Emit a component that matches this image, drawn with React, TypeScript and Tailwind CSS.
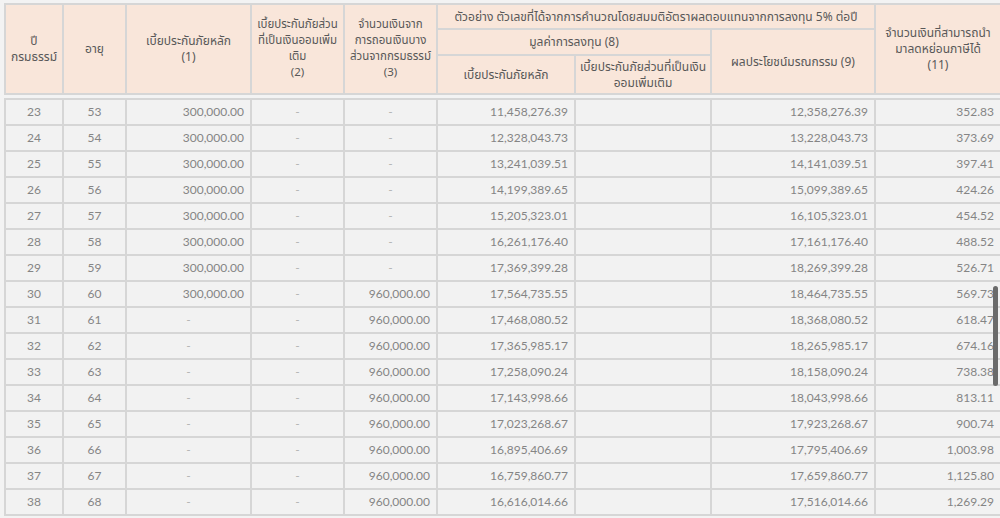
import React from "react"

type Row = [string, string, string, string, string, string, string, string, string]

const rows: Row[] = [
  ["23", "53", "300,000.00", "-", "-", "11,458,276.39", "", "12,358,276.39", "352.83"],
  ["24", "54", "300,000.00", "-", "-", "12,328,043.73", "", "13,228,043.73", "373.69"],
  ["25", "55", "300,000.00", "-", "-", "13,241,039.51", "", "14,141,039.51", "397.41"],
  ["26", "56", "300,000.00", "-", "-", "14,199,389.65", "", "15,099,389.65", "424.26"],
  ["27", "57", "300,000.00", "-", "-", "15,205,323.01", "", "16,105,323.01", "454.52"],
  ["28", "58", "300,000.00", "-", "-", "16,261,176.40", "", "17,161,176.40", "488.52"],
  ["29", "59", "300,000.00", "-", "-", "17,369,399.28", "", "18,269,399.28", "526.71"],
  ["30", "60", "300,000.00", "-", "960,000.00", "17,564,735.55", "", "18,464,735.55", "569.73"],
  ["31", "61", "-", "-", "960,000.00", "17,468,080.52", "", "18,368,080.52", "618.47"],
  ["32", "62", "-", "-", "960,000.00", "17,365,985.17", "", "18,265,985.17", "674.16"],
  ["33", "63", "-", "-", "960,000.00", "17,258,090.24", "", "18,158,090.24", "738.38"],
  ["34", "64", "-", "-", "960,000.00", "17,143,998.66", "", "18,043,998.66", "813.11"],
  ["35", "65", "-", "-", "960,000.00", "17,023,268.67", "", "17,923,268.67", "900.74"],
  ["36", "66", "-", "-", "960,000.00", "16,895,406.69", "", "17,795,406.69", "1,003.98"],
  ["37", "67", "-", "-", "960,000.00", "16,759,860.77", "", "17,659,860.77", "1,125.80"],
  ["38", "68", "-", "-", "960,000.00", "16,616,014.66", "", "17,516,014.66", "1,269.29"],
]

const widths = [58, 63, 125, 93, 93, 138, 136, 164, 126]

function Cols() {
  return (
    <colgroup>
      {widths.map((w, i) => (
        <col key={i} style={{ width: w }} />
      ))}
    </colgroup>
  )
}

const th =
  "border-2 border-[#d6d6d6] bg-[#f9e6da] text-center align-middle px-0 py-0 font-normal whitespace-nowrap overflow-hidden"

export default function App() {
  return (
    <div className="relative w-[1000px] h-[518px] overflow-hidden bg-[#f3f3f3] pt-[3px] pl-[4px]">
      <table
        className="table-fixed border-collapse w-[996px] text-[12px] leading-[16px] text-[#585858]"
        style={{ fontFamily: '"Noto Sans Thai", Tahoma, "Noto Sans", "DejaVu Sans", sans-serif' }}
      >
        <Cols />
        <thead>
          <tr className="h-[25px]">
            <th rowSpan={3} className={th}>
              ปี<br />กรมธรรม์
            </th>
            <th rowSpan={3} className={th}>อายุ</th>
            <th rowSpan={3} className={th}>
              เบี้ยประกันภัยหลัก<br />(1)
            </th>
            <th rowSpan={3} className={th + " text-[11.5px]"}>
              เบี้ยประกันภัยส่วน<br />ที่เป็นเงินออมเพิ่ม<br />เติม<br />(2)
            </th>
            <th rowSpan={3} className={th + " text-[11.5px]"}>
              จำนวนเงินจาก<br />การถอนเงินบาง<br />ส่วนจากกรมธรรม์<br />(3)
            </th>
            <th colSpan={3} className={th}>
              ตัวอย่าง ตัวเลขที่ได้จากการคำนวณโดยสมมติอัตราผลตอบแทนจากการลงทุน 5% ต่อปี
            </th>
            <th rowSpan={3} className={th}>
              จำนวนเงินที่สามารถนำ<br />มาลดหย่อนภาษีได้<br />(11)
            </th>
          </tr>
          <tr className="h-[26px]">
            <th colSpan={2} className={th}>มูลค่าการลงทุน (8)</th>
            <th rowSpan={2} className={th}>ผลประโยชน์มรณกรรม (9)</th>
          </tr>
          <tr className="h-[39px]">
            <th className={th}>เบี้ยประกันภัยหลัก</th>
            <th className={th}>
              เบี้ยประกันภัยส่วนที่เป็นเงิน<br />ออมเพิ่มเติม
            </th>
          </tr>
        </thead>
      </table>

      <div className="h-[3px]" />

      <table
        className="table-fixed border-collapse w-[996px] text-[12px] text-[#858585]"
        style={{ fontFamily: 'Lato, "Noto Sans", sans-serif' }}
      >
        <Cols />
        <tbody>
          {rows.map((r) => (
            <tr key={r[0]} className="h-[26px] bg-[#f2f2f2]">
              {r.map((v, i) => {
                const center = i < 2 || v === "-"
                return (
                  <td
                    key={i}
                    className={
                      "border-2 border-[#d6d6d6] py-0 " +
                      (center ? "text-center px-1 " : "text-right pr-[6px] pl-1 ") +
                      (v === "-" ? "text-[#b4b4b4]" : "")
                    }
                  >
                    {v}
                  </td>
                )
              })}
            </tr>
          ))}
        </tbody>
      </table>

      <div className="absolute left-[993px] top-[286px] w-[5px] h-[100px] rounded-full bg-[#6b6b6b]" />
    </div>
  )
}
